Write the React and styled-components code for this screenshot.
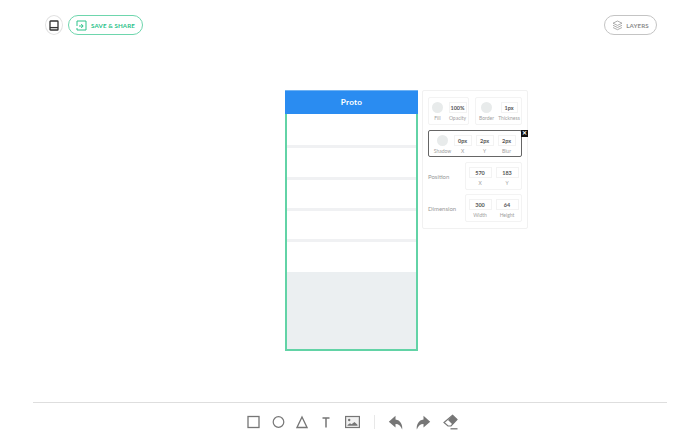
import React from "react";
import styled, { createGlobalStyle } from "styled-components";

const Global = createGlobalStyle`
  html, body { margin: 0; padding: 0; background: #fff; }
  body { width: 700px; height: 435px; overflow: hidden; font-family: "Lato", "Open Sans", sans-serif; }
`;
const Page = styled.div`
  width: 700px; height: 435px; display: flex; flex-direction: column;
`;
const TopBar = styled.header`
  display: flex; justify-content: space-between; align-items: center;
  padding: 15px 43px 0 45px; height: 20px;
`;
const TopLeft = styled.div`display: flex; align-items: center; gap: 5px;`;
const CircleButton = styled.button`
  width: 18px; height: 20px; padding: 0; border: 1.5px solid #e2e2e2; border-radius: 50%;
  background: #fff; display: flex; align-items: center; justify-content: center; color: #444;
`;
const PillButton = styled.button`
  height: 20px; box-sizing: border-box; display: flex; align-items: center; justify-content: center; gap: ${p => p.$gap}px;
  width: ${p => p.$width}px; padding: 0; border-radius: 10px; background: #fff;
  border: 1px solid ${p => p.$color}; color: ${p => p.$text};
  font: 700 6.2px "Lato", sans-serif; letter-spacing: .1px;
`;
const Canvas = styled.main`
  flex: 1; display: flex; align-items: flex-start; gap: 4px; padding: 55px 0 0 285px;
`;
const Phone = styled.section`width: 133px; display: flex; flex-direction: column;`;
const PhoneHeader = styled.div`
  height: 24px; background: #2a8cf1; color: #fff; display: flex; align-items: center; justify-content: center;
  font: 700 8.2px "Lato", sans-serif; letter-spacing: .2px; border-top: 1px solid #6fb2f3; box-sizing: border-box;
  padding-bottom: 2px;
`;
const PhoneBody = styled.div`
  height: 237px; box-sizing: border-box; display: flex; flex-direction: column; padding: 3px 0 0 0;
  border: 2px solid #62d3a6; border-top: 0; background: #fff;
`;
const ListRow = styled.div`
  height: 28.33px; flex: none; margin-bottom: 3px; position: relative; background: #fff;
  &::after { content: ""; position: absolute; left: 0; right: 0; bottom: -3px; height: 3px; background: #f0f1f3; }
`;
const LastRow = styled.div`height: 28.33px; flex: none; margin-bottom: 1px; background: #fff;`;
const EmptyArea = styled.div`flex: 1; background: #ebeff1;`;
const Panel = styled.aside`
  width: 106px; height: 139px; box-sizing: border-box; padding: 6px 5px 0; border: 1px solid #f1f1f1; border-radius: 2px;
  display: flex; flex-direction: column; background: #fff;
`;
const PanelRow = styled.div`display: flex; justify-content: space-between; margin-bottom: 5px;`;
const Group = styled.div`
  width: ${p => p.$width}px; height: 28px; box-sizing: border-box; border: 1px solid #f3f3f3; border-radius: 2px;
  display: flex; justify-content: center; gap: ${p => p.$gap}px; padding-top: 4px;
`;
const ShadowGroup = styled.div`
  position: relative; height: 27px; margin-bottom: 5px; box-sizing: border-box; border: 1px solid #666; border-radius: 2px;
  display: flex; gap: 4px; padding: 4px 0 0 6.5px;
`;
const Close = styled.span`
  position: absolute; right: -7px; top: -1px; width: 7px; height: 7px; background: #111; color: #fff;
  font: 700 6px/7px "Liberation Sans", sans-serif; text-align: center;
`;
const Cell = styled.div`
  display: flex; flex-direction: column; align-items: center; width: ${p => p.$w}px;
`;
const Swatch = styled.div`
  width: 11px; height: 11px; flex: none; border-radius: 50%; background: #e8ebeb;
`;
const Value = styled.div`
  width: 100%; height: 11px; flex: none; box-sizing: border-box; border: 1px solid #f3f3f3; display: flex; align-items: center; justify-content: center;
  font: 700 5.5px "Lato", sans-serif; color: #555;
`;
const Caption = styled.div`font: 400 5px/6px "Lato", sans-serif; color: #a0a0a0; margin-top: 2px; white-space: nowrap;`;
const FieldRow = styled.div`display: flex; align-items: center; justify-content: space-between; margin-bottom: 4px;`;
const FieldLabel = styled.div`font: 400 6px "Lato", sans-serif; color: #999;`;
const Divider = styled.hr`margin: 0 33px; border: 0; border-top: 1px solid #dedede; height: 0;`;
const Toolbar = styled.nav`
  height: 32px; box-sizing: border-box; display: flex; align-items: center; padding: 6px 0 0 247px; color: #767676;
`;
const ToolIcon = styled.svg`
  width: ${p => p.$w}px; height: ${p => p.$h || 14}px; margin-right: ${p => p.$mr}px; flex: none;
`;
const Sep = styled.div`width: 1px; height: 14px; background: #e8e8e8; margin-right: 13px;`;

const PropCell = ({ value, label, w }) => (
  <Cell $w={w}><Value>{value}</Value><Caption>{label}</Caption></Cell>
);
const SwatchCell = ({ label }) => (
  <Cell $w={14}><Swatch /><Caption>{label}</Caption></Cell>
);

export default function App() {
  return (
    <Page>
      <Global />
      <TopBar>
        <TopLeft>
          <CircleButton aria-label="Library">
            <svg width="10" height="11" viewBox="0 0 10 11" fill="none" stroke="#333" strokeWidth="1.3">
              <rect x="1" y="1" width="8" height="9" rx=".6" /><path d="M1 7.6h8" />
            </svg>
          </CircleButton>
          <PillButton $width={75} $gap={4} $color="#6ed6ad" $text="#2cc28a">
            <svg width="11" height="11" viewBox="0 0 11 11" fill="none" stroke="#2cc28a" strokeWidth="1">
              <path d="M3 1h7v9H4" /><path d="M1 6V1h2M1 8v2h3M3 6h4M5.2 4 7.2 6 5.2 8" />
            </svg>
            SAVE &amp; SHARE
          </PillButton>
        </TopLeft>
        <PillButton $width={53} $gap={3} $color="#c4c4c4" $text="#8c8c8c">
          <svg width="11" height="11" viewBox="0 0 11 11" fill="none" stroke="#999" strokeWidth=".8">
            <path d="M5.5 1 10 3.2 5.5 5.4 1 3.2z" /><path d="M1 5.3l4.5 2.2L10 5.3M1 7.5l4.5 2.2L10 7.5" />
          </svg>
          LAYERS
        </PillButton>
      </TopBar>
      <Canvas>
        <Phone>
          <PhoneHeader>Proto</PhoneHeader>
          <PhoneBody>
            <ListRow /><ListRow /><ListRow /><ListRow />
            <LastRow />
            <EmptyArea />
          </PhoneBody>
        </Phone>
        <Panel>
          <PanelRow>
            <Group $width={41} $gap={4}>
              <SwatchCell label="Fill" />
              <PropCell value="100%" label="Opacity" w={18} />
            </Group>
            <Group $width={47} $gap={7}>
              <SwatchCell label="Border" />
              <PropCell value="1px" label="Thickness" w={17} />
            </Group>
          </PanelRow>
          <ShadowGroup>
            <Close>✕</Close>
            <SwatchCell label="Shadow" />
            <PropCell value="0px" label="X" w={18} />
            <PropCell value="2px" label="Y" w={18} />
            <PropCell value="2px" label="Blur" w={18} />
          </ShadowGroup>
          <FieldRow>
            <FieldLabel>Position</FieldLabel>
            <Group $width={57} $gap={4}>
              <PropCell value="570" label="X" w={23} />
              <PropCell value="183" label="Y" w={23} />
            </Group>
          </FieldRow>
          <FieldRow>
            <FieldLabel>Dimension</FieldLabel>
            <Group $width={57} $gap={4}>
              <PropCell value="300" label="Width" w={23} />
              <PropCell value="64" label="Height" w={23} />
            </Group>
          </FieldRow>
        </Panel>
      </Canvas>
      <Divider />
      <Toolbar>
        <ToolIcon $w={13} $mr={12} viewBox="0 0 13 14" fill="none" stroke="currentColor" strokeWidth="1.3">
          <rect x="1" y="1.5" width="11" height="11" />
        </ToolIcon>
        <ToolIcon $w={13} $mr={11} viewBox="0 0 13 14" fill="none" stroke="currentColor" strokeWidth="1.2">
          <circle cx="6.5" cy="7" r="5.3" />
        </ToolIcon>
        <ToolIcon $w={12} $mr={14} viewBox="0 0 12 14" fill="none" stroke="currentColor" strokeWidth="1.3">
          <path d="M6 2 11 12.5H1z" />
        </ToolIcon>
        <ToolIcon $w={8} $mr={15} viewBox="0 0 8 14" fill="none" stroke="currentColor" strokeWidth="1.5">
          <path d="M.5 3h7M4 3v9.5" />
        </ToolIcon>
        <ToolIcon $w={15} $mr={14} viewBox="0 0 15 14" fill="#f1f1f1" stroke="currentColor" strokeWidth="1.2">
          <rect x=".6" y="1.5" width="13.8" height="11" />
          <circle cx="4.2" cy="5" r="1.2" fill="currentColor" stroke="none" />
          <path d="M2.5 10.8V10L5 8.3l1.5 1 3-2.3 3 2.8v1z" fill="currentColor" stroke="none" />
        </ToolIcon>
        <Sep />
        <ToolIcon $w={15} $h={15} $mr={13} viewBox="0 0 15 15" fill="currentColor">
          <path d="M7.5.8.8 6.8l6.7 5.6V9c2.7-.2 5 1.5 6.7 5.4.6-4.6-1.8-9.400-6.700-9.900z" />
        </ToolIcon>
        <ToolIcon $w={15} $h={15} $mr={12} viewBox="0 0 15 15" fill="currentColor">
          <path d="M7.5.8l6.700 6-6.700 5.600V9c-2.700-.2-5 1.500-6.700 5.400C.2 9.800 2.600 5 7.500 4.500z" />
        </ToolIcon>
        <ToolIcon $w={15} $h={16} $mr={0} viewBox="0 0 15 16" fill="none" stroke="currentColor" strokeWidth="1.2">
          <path d="M9.5 1.2 14 5.500 8 12H5L1 8.500z" />
          <path d="M9.5 1.2 14 5.500 9.500 10.500 5 6z" fill="currentColor" stroke="none" />
          <path d="M7.500 14.800H14.500" strokeWidth="1.3" />
        </ToolIcon>
      </Toolbar>
    </Page>
  );
}
